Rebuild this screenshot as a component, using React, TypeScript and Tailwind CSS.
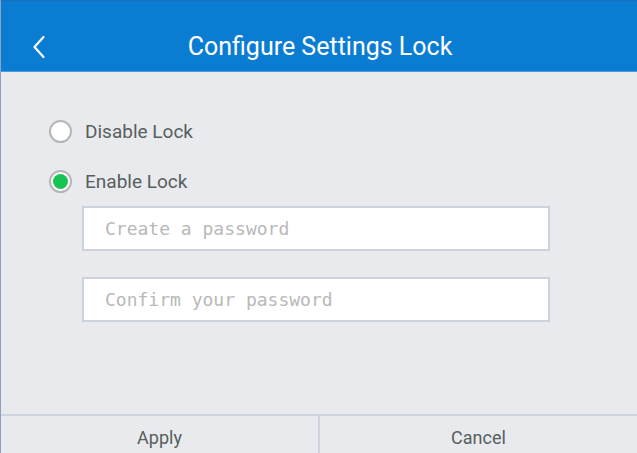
import React, { useState } from 'react'

function Radio({ checked, label, onClick }: { checked: boolean; label: string; onClick: () => void }) {
  return (
    <div className="flex items-center h-[24px] cursor-pointer" onClick={onClick}>
      <span className="w-[23px] h-[23px] rounded-full border-2 border-[#b4b6b8] bg-white flex items-center justify-center">
        {checked && <span className="w-[15px] h-[15px] rounded-full bg-[#17c352]" />}
      </span>
      <span className="ml-[13px] text-[19px] leading-none text-[#56605c]">{label}</span>
    </div>
  )
}

export default function App() {
  const [Lock, setLock] = useState("enable")
  return (
    <div className="w-[637px] h-[453px] flex flex-col bg-[#e9eaee] font-['Roboto',sans-serif] border-l border-[#8f9fbf]">
      <div className="h-[72px] bg-[#0a7dd3] border-t border-[#1a6fc0] border-b border-b-[#4a9ae0] flex items-start pt-[31px] relative">
        <svg className="absolute left-[31px] top-[34px]" width="14" height="24" viewBox="0 0 14 24" fill="none">
          <path d="M11.5 2 L2.5 12 L11.5 22" stroke="white" strokeWidth="2.2" strokeLinecap="round" strokeLinejoin="round" />
        </svg>
        <div className="flex-1 text-center text-white text-[25px] leading-[30px] pl-[2px]">Configure Settings Lock</div>
      </div>

      <div className="flex-1 pl-[48px] pt-[47px]">
        <Radio checked={Lock === "disable"} label="Disable Lock" onClick={() => setLock("disable")} />
        <div className="mt-[26px]">
          <Radio checked={Lock === "enable"} label="Enable Lock" onClick={() => setLock("enable")} />
        </div>
        <div className="ml-[33px] mt-[13px] flex flex-col gap-[26px] w-[468px]">
          <input
            className="h-[45px] bg-white border-2 border-[#ccd3de] px-[21px] text-[18px] font-['DejaVu_Sans_Mono',monospace] placeholder-[#b8b8b8] outline-none"
            placeholder="Create a password"
            type="password"
          />
          <input
            className="h-[45px] bg-white border-2 border-[#ccd3de] px-[21px] text-[18px] font-['DejaVu_Sans_Mono',monospace] placeholder-[#b8b8b8] outline-none"
            placeholder="Confirm your password"
            type="password"
          />
        </div>
      </div>

      <div className="h-[39px] flex border-t-2 border-[#cdd3df]">
        <button className="flex-1 text-[18px] text-[#56605c] border-r-2 border-[#cdd3df] pt-[5px]">Apply</button>
        <button className="flex-1 text-[18px] text-[#56605c] pt-[5px]">Cancel</button>
      </div>
    </div>
  )
}
